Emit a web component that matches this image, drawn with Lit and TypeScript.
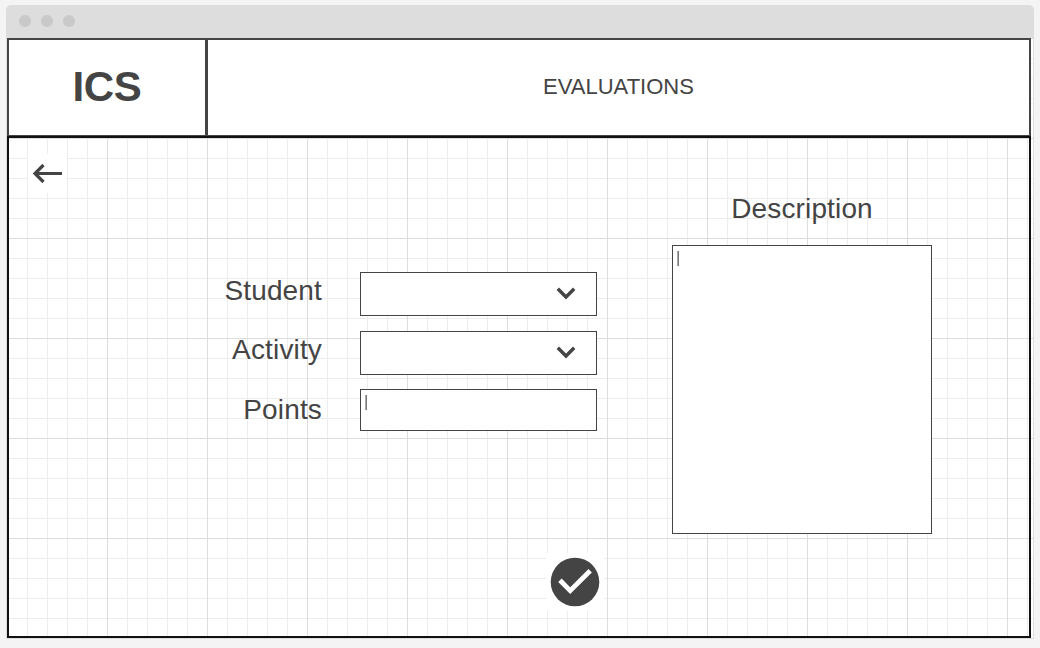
import { LitElement, html, css } from "lit";
import { customElement } from "lit/decorators.js";

@customElement("select-box")
class SelectBox extends LitElement {
  static styles = css`
    :host {
      display: flex;
      box-sizing: border-box;
      height: 44px;
      border: 1px solid #444;
      background: #fff;
      align-items: center;
      justify-content: flex-end;
      padding-right: 20px;
    }
    svg { display: block; }
  `;
  render() {
    return html`<svg width="20" height="14" viewBox="0 0 20 14" fill="none" stroke="#444" stroke-width="3.4">
      <path d="M1.8 1.8 L10 10 L18.2 1.8" />
    </svg>`;
  }
}

@customElement("text-box")
class TextBox extends LitElement {
  static styles = css`
    :host {
      display: block;
      box-sizing: border-box;
      border: 1px solid #444;
      background: #fff;
      padding: 5px 0 0 4px;
    }
    .caret {
      width: 2px;
      height: 15px;
      background: linear-gradient(90deg, #aaa 50%, #777 50%);
    }
  `;
  render() {
    return html`<div class="caret"></div>`;
  }
}

@customElement("app-root")
class AppRoot extends LitElement {
  static styles = css`
    :host {
      display: block;
      box-sizing: border-box;
      width: 1040px;
      height: 648px;
      padding: 5px 6px 9px;
      background: #f4f4f4;
      color: #444;
      font-family: "Liberation Sans", Arial, sans-serif;
      overflow: hidden;
    }
    .window {
      height: 634px;
      display: flex;
      flex-direction: column;
      border-radius: 5px 5px 0 0;
      overflow: hidden;
    }
    .titlebar {
      height: 33px;
      flex: none;
      box-sizing: border-box;
      background: #ddd;
      display: flex;
      gap: 10px;
      padding: 10px 13px;
    }
    .dot {
      width: 12px;
      height: 12px;
      border-radius: 50%;
      background: #c9c9c9;
    }
    .canvas {
      flex: 1;
      box-sizing: border-box;
      border: 1px solid #ddd;
      border-top: 0;
      padding-right: 2px;
      background-color: #fff;
      background-image:
        linear-gradient(#ddd 1px, transparent 1px),
        linear-gradient(90deg, #ddd 1px, transparent 1px),
        linear-gradient(#ededed 1px, transparent 1px),
        linear-gradient(90deg, #ededed 1px, transparent 1px);
      background-size: 100px 100px, 100px 100px, 20px 20px, 20px 20px;
    }
    .header {
      height: 98px;
      box-sizing: border-box;
      display: flex;
      background: #fff;
      border: 2px solid #444;
      border-bottom-width: 1px;
    }
    .brand {
      width: 199px;
      box-sizing: border-box;
      border-right: 3px solid #444;
      text-align: center;
      font-size: 42px;
      font-weight: bold;
      letter-spacing: -0.3px;
      line-height: 94px;
    }
    .title {
      flex: 1;
      text-align: center;
      font-size: 22px;
      line-height: 94px;
    }
    .body {
      height: 502px;
      box-sizing: border-box;
      border: 2px solid #111;
      padding: 16px 97px 0 19px;
      display: grid;
      grid-template-columns: 39px 605px 260px;
      grid-template-rows: 399px 58px;
      align-items: start;
    }
    .patch { background: #fff; }
    .patch svg { display: block; }
    .form {
      padding-top: 118px;
      display: grid;
      grid-template-columns: 255px 237px;
      column-gap: 38px;
      grid-template-rows: 44px 44px 42px;
      row-gap: 15px;
      font-size: 28px;
      letter-spacing: 0.15px;
    }
    .label {
      text-align: right;
      line-height: 37px;
    }
    .points { margin-top: -1px; height: 42px; }
    .points-label { line-height: 39px; }
    .description { padding-top: 36px; }
    .caption {
      height: 55px;
      line-height: 38px;
      font-size: 28px;
      letter-spacing: 0.15px;
      text-align: center;
    }
    .area { height: 289px; }
    .confirm {
      grid-column: 1 / -1;
      width: 58px;
      margin-left: 518px;
    }
  `;

  render() {
    return html`
      <div class="window">
        <div class="titlebar">
          <span class="dot"></span><span class="dot"></span><span class="dot"></span>
        </div>
        <div class="canvas">
          <div class="header">
            <div class="brand">ICS</div>
            <div class="title">EVALUATIONS</div>
          </div>
          <div class="body">
            <div class="patch">
              <svg width="39" height="39" viewBox="0 0 39 39" fill="none" stroke="#444" stroke-width="3.2">
                <path d="M34 19.5H7M15.5 11L7 19.5L15.5 28" />
              </svg>
            </div>
            <div class="form">
              <div class="label">Student</div>
              <select-box></select-box>
              <div class="label">Activity</div>
              <select-box></select-box>
              <div class="label points-label">Points</div>
              <text-box class="points"></text-box>
            </div>
            <div class="description">
              <div class="caption">Description</div>
              <text-box class="area"></text-box>
            </div>
            <div class="patch confirm">
              <svg width="58" height="58" viewBox="0 0 58 58">
                <circle cx="29" cy="29" r="24.3" fill="#444" />
                <path d="M13.9 27.3L24.2 37.6L44.2 17.7" fill="none" stroke="#fff" stroke-width="4.8" />
              </svg>
            </div>
          </div>
        </div>
      </div>
    `;
  }
}
